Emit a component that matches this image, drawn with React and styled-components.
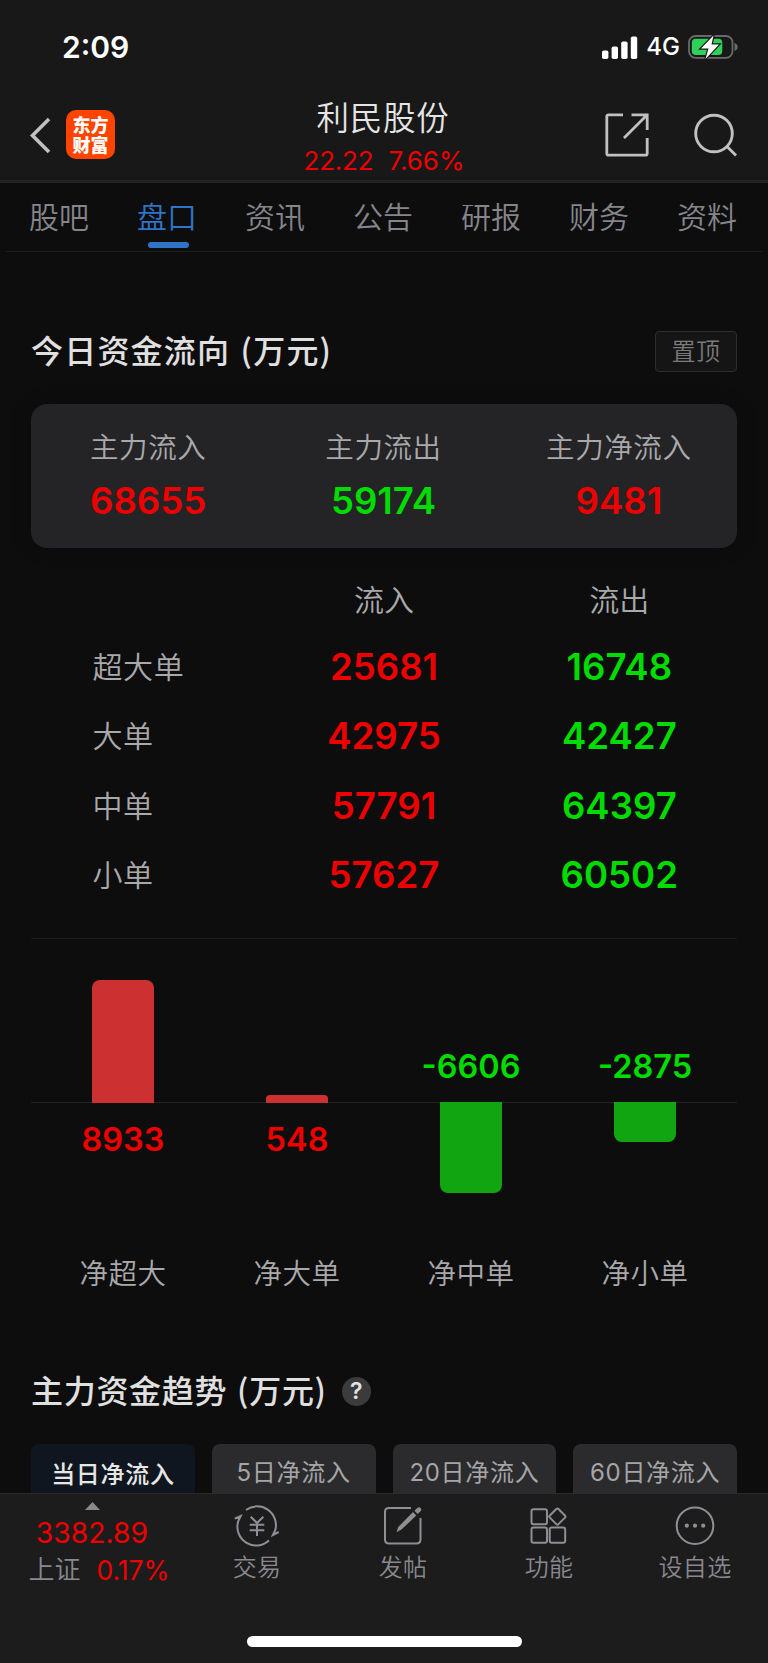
import styled, { createGlobalStyle } from 'styled-components';

const RED = '#ee0000';
const GREEN = '#00dc00';

const GlobalStyle = createGlobalStyle`
  * {
    box-sizing: border-box;
  }
  body {
    margin: 0;
    background: #0d0d0d;
    font-family: 'Inter', 'Noto Sans CJK SC', sans-serif;
    color: #a9a9ab;
  }
`;

const Screen = styled.div`
  display: flex;
  flex-direction: column;
  width: 768px;
  height: 1663px;
  overflow: hidden;
`;

// one line of text, sized by props so that every label shares the same metrics
// (the CJK face sits low in its line box, so those lines are lifted by 2px)
const Text = styled.span`
  display: block;
  margin: ${({ $latin }) => ($latin ? '0' : '-2px 0 2px')};
  white-space: nowrap;
  font-family: ${({ $latin }) => ($latin ? "'Inter', 'Noto Sans CJK SC'" : "'Noto Sans CJK SC'")}, sans-serif;
  font-size: ${({ $size }) => $size}px;
  line-height: ${({ $line }) => $line}px;
  font-weight: ${({ $weight }) => $weight || 350};
  letter-spacing: ${({ $track }) => $track || 0}px;
  color: ${({ $color }) => $color || 'inherit'};
`;

/* ---------- header ---------- */

const Top = styled.header`
  height: 183px;
  background: #181818;
  border-bottom: 3px solid #242424;
`;

const StatusBar = styled.div`
  display: flex;
  justify-content: space-between;
  align-items: center;
  height: 95px;
  padding: 0 30px 1px 62px;
`;

const StatusIcons = styled.div`
  display: flex;
  align-items: center;
  gap: 8px;
`;

const NavBar = styled.div`
  display: grid;
  grid-template-columns: 1fr auto 1fr;
  height: 85px;
  padding: 0 31px 0 29px;
`;

const NavLeft = styled.div`
  display: flex;
  align-items: center;
  gap: 15px;
  padding-bottom: 6px;
`;

const Logo = styled.div`
  display: grid;
  place-content: center;
  width: 49px;
  height: 49px;
  margin-top: -1px;
  border-radius: 10px;
  background: #ff4400;
  color: #fff;
  font: 900 18px/20px 'Noto Sans CJK SC', sans-serif;
  text-align: center;
`;

const LogoLine = styled.span`
  height: 20px;
  margin-top: -1px;
  margin-bottom: 1px;
`;

const StockTitle = styled.div`
  display: flex;
  flex-direction: column;
  align-items: center;
`;

const Quote = styled.div`
  display: flex;
  gap: 15px;
  padding: 1px 0 0 2px;
`;

const NavRight = styled.div`
  display: flex;
  justify-content: flex-end;
  align-items: center;
  gap: 44px;
  padding-bottom: 6px;
`;

/* ---------- tabs ---------- */

const Tabs = styled.nav`
  display: flex;
  justify-content: space-between;
  height: 69px;
  margin: 0 6px;
  padding: 0 25px 0 23px;
  border-bottom: 1px solid #1e1e1e;
`;

const Tab = styled.div`
  display: flex;
  flex-direction: column;
  align-items: center;
  padding-top: 14px;
  color: ${({ $active }) => ($active ? '#2f74c8' : '#85858b')};

  &::after {
    content: '';
    width: 41px;
    height: 6px;
    margin: 5px 0 0 2px;
    border-radius: 3px;
    background: ${({ $active }) => ($active ? '#2f74c8' : 'transparent')};
  }
`;

/* ---------- money flow ---------- */

const Content = styled.main`
  display: flex;
  flex-direction: column;
  height: 1241px;
  padding: 78px 31px 0;
`;

const TitleRow = styled.div`
  display: flex;
  justify-content: space-between;
  align-items: center;
  height: 42px;
`;

const SectionTitle = styled(Text)`
  word-spacing: 2px;
`;

const PinButton = styled.button`
  display: grid;
  place-content: center;
  width: 82px;
  height: 41px;
  margin-top: 1px;
  padding: 1px 0 0;
  border: 1px solid #2d2d2d;
  border-radius: 4px;
  background: #151515;
  color: #7b7b7b;
`;

const Card = styled.div`
  display: grid;
  grid-template-columns: repeat(3, 1fr);
  height: 144px;
  margin-top: 32px;
  padding-top: 24px;
  border-radius: 16px;
  background: #242426;
  box-shadow: 0 0 20px rgba(0, 0, 0, 0.2);
`;

const CardItem = styled.div`
  display: flex;
  flex-direction: column;
  align-items: center;
  gap: 13px;
  padding-right: 1px;
`;

const Table = styled.div`
  height: 391px;
  padding-top: 32px;
  border-bottom: 1px solid #1b1b1b;
`;

const TableRow = styled.div`
  display: grid;
  grid-template-columns: repeat(3, 1fr);
  align-items: center;
  justify-items: center;
  height: ${({ $head }) => ($head ? '40px' : '69.5px')};
  margin-bottom: ${({ $head }) => ($head ? '12px' : '0')};
`;

const RowName = styled(Text)`
  justify-self: start;
  padding-left: 61.5px;
`;

/* ---------- net flow chart ---------- */

// the zero line is drawn as a background, it runs wider than the columns
const Chart = styled.div`
  display: grid;
  grid-template-columns: repeat(4, 174px);
  justify-content: center;
  height: 371px;
  background: linear-gradient(#232323, #232323) 0 163px / 100% 1px no-repeat;
`;

const ChartCol = styled.div`
  display: grid;
  grid-template-rows: 164px 140px auto;
  justify-items: center;
`;

const Half = styled.div`
  display: flex;
  flex-direction: column;
  align-items: center;
  justify-content: ${({ $upper }) => ($upper ? 'flex-end' : 'flex-start')};
`;

const Bar = styled.div`
  width: 62px;
  background: ${({ $up }) => ($up ? '#cc3030' : '#12a512')};
  border-radius: ${({ $up, $r }) => ($up ? `${$r}px ${$r}px 0 0` : `0 0 ${$r}px ${$r}px`)};
  margin-top: ${({ $up }) => ($up ? '0' : '-1px')};
`;

const BarValue = styled(Text)`
  margin: ${({ $up }) => ($up ? '17px 0 0' : '0 0 16px')};
`;

/* ---------- trend ---------- */

const TrendTitle = styled.div`
  display: flex;
  align-items: center;
  gap: 15px;
  height: 42px;
  margin-top: 60px;
`;

const Help = styled.span`
  display: grid;
  place-content: center;
  width: 29px;
  height: 29px;
  border-radius: 50%;
  background: #3b3b3b;
  color: #e2e2e2;
  font-size: 23px;
  font-weight: 600;
  line-height: 29px;
`;

const RangeTabs = styled.div`
  display: grid;
  grid-template-columns: repeat(4, 1fr);
  gap: 17px;
  margin-top: 32px;
`;

const RangeTab = styled.div`
  height: 49px;
  padding-top: ${({ $active }) => ($active ? 13 : 11)}px;
  border-radius: 8px 8px 0 0;
  text-align: center;
  background: ${({ $active }) => ($active ? '#0f161f' : '#2b2b2d')};
  color: ${({ $active }) => ($active ? '#e6e6e6' : '#a5a5a7')};
`;

/* ---------- bottom bar ---------- */

const BottomBar = styled.footer`
  display: flex;
  flex-direction: column;
  align-items: center;
  height: 170px;
  border-top: 1px solid #2b2b2b;
  background: #1c1c1c;
  color: #88888e;
`;

const BottomItems = styled.div`
  display: grid;
  grid-template-columns: 184px repeat(4, 146px);
  height: 142px;
  width: 768px;
`;

const IndexBox = styled.div`
  display: flex;
  flex-direction: column;
  align-items: center;
  padding-top: 8px;
`;

const IndexRow = styled.div`
  display: flex;
  gap: 16px;
  margin: -2px 0 0 14px;
`;

const Action = styled.div`
  display: flex;
  flex-direction: column;
  align-items: center;
  padding-top: 11px;
  gap: 4px;
`;

const HomeIndicator = styled.div`
  width: 275px;
  height: 11px;
  border-radius: 6px;
  background: #fff;
`;

const tabs = ['股吧', '盘口', '资讯', '公告', '研报', '财务', '资料'];

const summary = [
  { name: '主力流入', value: '68655', color: RED },
  { name: '主力流出', value: '59174', color: GREEN },
  { name: '主力净流入', value: '9481', color: RED },
];

const orders = [
  ['超大单', '25681', '16748'],
  ['大单', '42975', '42427'],
  ['中单', '57791', '64397'],
  ['小单', '57627', '60502'],
];

const nets = [
  { name: '净超大', value: 8933 },
  { name: '净大单', value: 548 },
  { name: '净中单', value: -6606 },
  { name: '净小单', value: -2875 },
];

const ranges = ['当日净流入', '5日净流入', '20日净流入', '60日净流入'];

function SignalIcon() {
  return (
    <svg width="36" height="23" viewBox="0 0 36 23" fill="#fff">
      <rect x="0" y="14.5" width="6.4" height="8.5" rx="1.8" />
      <rect x="9.6" y="10.5" width="6.4" height="12.5" rx="1.8" />
      <rect x="19.2" y="5.5" width="6.4" height="17.5" rx="1.8" />
      <rect x="28.8" y="0.5" width="6.4" height="22.5" rx="1.8" />
    </svg>
  );
}

function BatteryIcon() {
  return (
    <svg width="50" height="26" viewBox="0 0 50 26">
      <rect x="1" y="2" width="43.5" height="21.8" rx="6.5" fill="none" stroke="#6a6a6c" strokeWidth="1.8" />
      <path d="M46.5 9v8c2-.6 3.2-2.2 3.2-4s-1.2-3.4-3.2-4z" fill="#6a6a6c" />
      <rect x="3.8" y="4.8" width="30.5" height="16.2" rx="4" fill="#30d158" />
      <path d="M25.5 1.500 13 14.500h7.500l-3 10.500L31 10.500h-7.500z" fill="#fff" stroke="#181818" strokeWidth="2.4" paintOrder="stroke" />
    </svg>
  );
}

function BackIcon() {
  return (
    <svg width="22" height="37" viewBox="0 0 22 37" fill="none" stroke="#c0c0c0" strokeWidth="3.6">
      <path d="M20 2 3.500 18.500 20 35" />
    </svg>
  );
}

function ShareIcon() {
  return (
    <svg width="44" height="44" viewBox="0 0 44 44" fill="none" stroke="#c0c0c0" strokeWidth="2.8">
      <path d="M18 1.800H3.500Q1.800 1.800 1.800 3.500V40.500Q1.800 42.200 3.500 42.200H40.500Q42.200 42.200 42.200 40.500V25" />
      <path d="M26.500 1.800H42.200V17M41.500 2.500 19 25" />
    </svg>
  );
}

function SearchIcon() {
  return (
    <svg width="44" height="44" viewBox="0 0 44 44" fill="none" stroke="#c0c0c0" strokeWidth="2.9">
      <circle cx="21" cy="20.5" r="18.300" />
      <path d="M33.500 33 43 42.500" />
    </svg>
  );
}

const line = { width: 46, height: 42, viewBox: '0 0 46 42', fill: 'none', stroke: '#8e8e94', strokeWidth: 2 };

function TradeIcon() {
  return (
    <svg {...line}>
      <path d="M12 5A18.800 18.800 0 0 1 41.300 25L38.900 30 44.700 27" />
      <path d="M35 35.500A18.800 18.800 0 0 1 4.300 16L6.700 11 .700 13.700" />
      <path d="M16.700 11.700 23 18 29.400 11.700M23 18V31M15.700 19.800H30.300M15.700 25.300H30.300" />
    </svg>
  );
}

function PostIcon() {
  return (
    <svg {...line}>
      <path d="M31 3H9Q5 3 5 7V34.500Q5 38.500 9 38.500H36.500Q40.500 38.500 40.500 34.500V13" />
      <path d="M16.500 27.300 18.200 22 33 7.100 36.300 10.400 21.500 24.600z M34.400 5.700 37.500 2.700Q39.500 1.700 40.800 3.200 41.800 4.800 40.800 5.900L37.700 8.900z" fill="#8e8e94" stroke="none" />
    </svg>
  );
}

function GridIcon() {
  return (
    <svg {...line}>
      <rect x="5.5" y="4.2" width="15.5" height="15" rx="2" />
      <rect x="5.5" y="22.6" width="15.5" height="15.2" rx="2" />
      <rect x="23.7" y="22.6" width="15.5" height="15.2" rx="2" />
      <rect x="25.3" y="5.5" width="12.2" height="12.2" rx="1.5" transform="rotate(45 31.4 11.6)" />
    </svg>
  );
}

function MoreIcon() {
  return (
    <svg {...line}>
      <circle cx="23" cy="20.7" r="18.3" />
      <g fill="#8e8e94" stroke="none">
        <circle cx="14.8" cy="20.7" r="2.1" />
        <circle cx="23" cy="20.7" r="2.1" />
        <circle cx="31.2" cy="20.7" r="2.1" />
      </g>
    </svg>
  );
}

const actions = [
  { name: '交易', Icon: TradeIcon },
  { name: '发帖', Icon: PostIcon },
  { name: '功能', Icon: GridIcon },
  { name: '设自选', Icon: MoreIcon },
];

function NetColumn({ name, value }) {
  const up = value > 0;
  // 8933 draws as 123px high
  const height = Math.round(Math.abs(value) * 0.01377);
  const bar = <Bar $up={up} $r={Math.min(8, height / 2)} style={{ height }} />;
  const label = (
    <BarValue $latin $up={up} $size={32.5} $line={40} $weight={600} $color={up ? RED : GREEN}>
      {value}
    </BarValue>
  );

  return (
    <ChartCol>
      <Half $upper>{up ? bar : label}</Half>
      <Half>{up ? label : bar}</Half>
      <Text $size={28.5} $line={61} $track={0.5}>{name}</Text>
    </ChartCol>
  );
}

export default function App() {
  return (
    <Screen>
      <GlobalStyle />
      <Top>
        <StatusBar>
          <Text $latin $size={30} $line={36} $weight={600} $color="#fff">2:09</Text>
          <StatusIcons>
            <SignalIcon />
            <Text $latin $size={24} $line={36} $weight={500} $color="#fff">4G</Text>
            <BatteryIcon />
          </StatusIcons>
        </StatusBar>
        <NavBar>
          <NavLeft>
            <BackIcon />
            <Logo>
              <LogoLine>东方</LogoLine>
              <LogoLine>财富</LogoLine>
            </Logo>
          </NavLeft>
          <StockTitle>
            <Text $size={32.5} $line={45} $track={0.7} $color="#e5e5e5">利民股份</Text>
            <Quote>
              <Text $latin $size={26} $line={40} $weight={400} $color={RED} $track={-0.2}>22.22</Text>
              <Text $latin $size={26} $line={40} $weight={400} $color={RED}>7.66%</Text>
            </Quote>
          </StockTitle>
          <NavRight>
            <ShareIcon />
            <SearchIcon />
          </NavRight>
        </NavBar>
      </Top>

      <Tabs>
        {tabs.map((tab) => (
          <Tab key={tab} $active={tab === '盘口'}>
            <Text $size={30} $line={40}>{tab}</Text>
          </Tab>
        ))}
      </Tabs>

      <Content>
        <TitleRow>
          <SectionTitle $size={32} $line={42} $weight={500} $track={1.2} $color="#e0e0e0">今日资金流向 (万元)</SectionTitle>
          <PinButton>
            <Text $size={24} $line={36} $track={0.5}>置顶</Text>
          </PinButton>
        </TitleRow>

        <Card>
          {summary.map((item) => (
            <CardItem key={item.name}>
              <Text $size={28.5} $line={40} $track={0.6}>{item.name}</Text>
              <Text $latin $size={36.6} $line={40} $weight={600} $color={item.color}>{item.value}</Text>
            </CardItem>
          ))}
        </Card>

        <Table>
          <TableRow $head>
            <span />
            <Text $size={30} $line={40}>流入</Text>
            <Text $size={30} $line={40}>流出</Text>
          </TableRow>
          {orders.map(([name, inflow, outflow]) => (
            <TableRow key={name}>
              <RowName $size={30} $line={40} $track={0.6}>{name}</RowName>
              <Text $latin $size={36.6} $line={40} $weight={600} $color={RED}>{inflow}</Text>
              <Text $latin $size={36.6} $line={40} $weight={600} $color={GREEN}>{outflow}</Text>
            </TableRow>
          ))}
        </Table>

        <Chart>
          {nets.map((net) => (
            <NetColumn key={net.name} {...net} />
          ))}
        </Chart>

        <TrendTitle>
          <SectionTitle $size={32} $line={42} $weight={500} $track={0.7} $color="#e0e0e0">主力资金趋势 (万元)</SectionTitle>
          <Help>?</Help>
        </TrendTitle>
        <RangeTabs>
          {ranges.map((range, i) => (
            <RangeTab key={range} $active={i === 0}>
              <Text $latin $size={24} $line={36} $weight={i === 0 ? 500 : 400} $track={0.7}>{range}</Text>
            </RangeTab>
          ))}
        </RangeTabs>
      </Content>

      <BottomBar>
        <BottomItems>
          <IndexBox>
            <svg width="15" height="8" viewBox="0 0 15 8">
              <path d="M0 8 7.500 0 15 8z" fill="#88888e" />
            </svg>
            <Text $latin $size={28.3} $line={47} $weight={400} $color={RED}>3382.89</Text>
            <IndexRow>
              <Text $size={26} $line={30}>上证</Text>
              <Text $latin $size={26.5} $line={30} $weight={400} $color={RED}>0.17%</Text>
            </IndexRow>
          </IndexBox>
          {actions.map(({ name, Icon }) => (
            <Action key={name}>
              <Icon />
              <Text $size={24} $line={34} $track={0.3}>{name}</Text>
            </Action>
          ))}
        </BottomItems>
        <HomeIndicator />
      </BottomBar>
    </Screen>
  );
}
